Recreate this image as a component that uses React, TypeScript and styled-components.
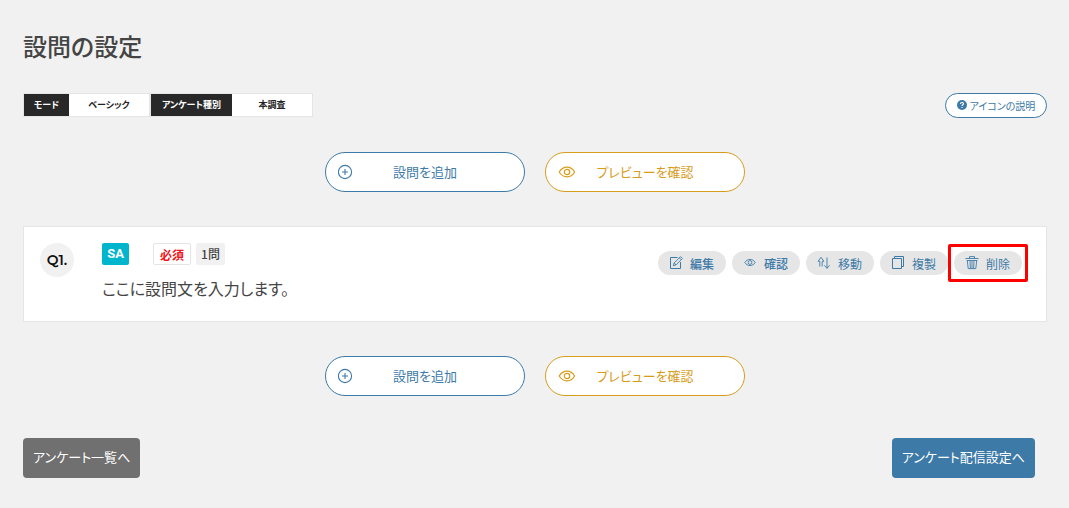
import React from 'react';
import styled, { createGlobalStyle } from 'styled-components';

const blue = '#3d7aa7';
const amber = '#d89c1a';

const GlobalStyle = createGlobalStyle`
  *, *::before, *::after { box-sizing: border-box; }
  body {
    margin: 0;
    background: #f1f1f1;
    color: #444;
    font-family: "Noto Sans CJK JP", "Noto Sans", sans-serif;
    font-feature-settings: "palt";
    font-size: 13px;
  }
  button { font: inherit; font-feature-settings: inherit; cursor: pointer; }
`;

const Page = styled.main`
  padding: 28px 22px 30px 23px;
`;

const Title = styled.h1`
  margin: 0 0 29px;
  font-size: 24px;
  line-height: 36px;
  font-weight: 500;
`;

const InfoBar = styled.div`
  display: flex;
  justify-content: space-between;
  align-items: flex-start;
`;

const Tags = styled.div`
  display: flex;
`;

const Tag = styled.dl`
  display: flex;
  margin: 0;
  border: 1px solid #e5e5e5;
  font-size: 9px;
  line-height: 22px;
  font-weight: 700;
  color: #222;
  text-align: center;
`;

const TagName = styled.dt<{ $wide?: boolean }>`
  width: ${(p) => (p.$wide ? 81 : 45)}px;
  background: #282828;
  color: #fff;
`;

const TagValue = styled.dd`
  width: 80px;
  margin: 0;
  background: #fff;
`;

const HelpButton = styled.button`
  display: flex;
  align-items: center;
  justify-content: center;
  gap: 3px;
  width: 102px;
  height: 25px;
  padding: 0 0 1px;
  border: 1px solid ${blue};
  border-radius: 13px;
  background: #fff;
  color: ${blue};
  && { font-size: 10px; }
`;

const Actions = styled.div`
  display: flex;
  justify-content: center;
  gap: 20px;
  margin: 34px 0;
`;

const ActionButton = styled.button<{ $color: string }>`
  display: grid;
  grid-template-columns: 20px 1fr 20px;
  align-items: center;
  justify-items: center;
  width: 200px;
  height: 40px;
  padding: 0 10px;
  border: 1px solid ${(p) => p.$color};
  border-radius: 20px;
  background: #fff;
  color: ${(p) => p.$color};
`;

const ActionLabel = styled.span`
  padding-bottom: 2px;
`;

const Card = styled.section`
  display: flex;
  align-items: flex-start;
  min-height: 96px;
  padding: 16px 24px 16px 16px;
  border: 1px solid #e5e5e5;
  background: #fff;
`;

const Number = styled.span`
  display: flex;
  align-items: center;
  justify-content: center;
  width: 34px;
  height: 34px;
  margin-right: 28px;
  border-radius: 50%;
  background: #f1f1f1;
  color: #111;
  font: 600 14px/34px Montserrat, Inter, sans-serif;
`;

const Question = styled.div`
  flex: 1;
`;

const Badges = styled.div`
  display: flex;
  gap: 5px;
  height: 22px;
  font-size: 12px;
  line-height: 22px;
  font-weight: 500;
`;

const TypeBadge = styled.span`
  width: 27px;
  margin-right: 19px;
  border-radius: 2px;
  background: #00b5cc;
  color: #fff;
  font-family: Roboto, sans-serif;
  font-size: 13px;
  font-weight: 700;
  text-align: center;
`;

const RequiredBadge = styled.span`
  width: 38px;
  border: 1px solid #e5e5e5;
  border-radius: 2px;
  color: #ee1520;
  font-weight: 700;
  text-align: center;
`;

const CountBadge = styled.span`
  width: 29px;
  border-radius: 2px;
  background: #f1f1f1;
  text-align: center;
`;

const QuestionText = styled.p`
  margin: 10px 0 0;
  font-size: 16px;
  line-height: 26px;
`;

const Tools = styled.div`
  display: flex;
  gap: 6px;
  margin-top: 8px;
`;

const ToolButton = styled.button<{ $strong?: boolean; $marked?: boolean }>`
  position: relative;
  display: flex;
  align-items: center;
  gap: 7px;
  width: 68px;
  height: 24px;
  padding: 0 0 0 11px;
  border: 0;
  border-radius: 12px;
  background: #e6e6e6;
  color: ${blue};
  && {
    font-size: 12px;
    font-weight: ${(p) => (p.$strong ? 500 : 400)};
  }
  &::after {
    content: "";
    display: ${(p) => (p.$marked ? 'block' : 'none')};
    position: absolute;
    inset: -7px -6px;
    border: 3px solid #f00;
    border-radius: 2px;
  }
`;

const Footer = styled.nav`
  display: flex;
  justify-content: space-between;
  margin-top: 42px;
  padding-right: 12px;
`;

const NavLink = styled.a<{ $bg: string }>`
  height: 40px;
  padding: 0 10px;
  border-radius: 4px;
  background: ${(p) => p.$bg};
  color: #fff;
  line-height: 38px;
  text-decoration: none;
`;

const Icon = styled.svg`
  flex: none;
  fill: none;
  stroke: currentColor;
`;

const PlusIcon = () => (
  <Icon width="16" height="16" viewBox="0 0 16 16" strokeWidth="1.1">
    <circle cx="7" cy="8" r="6.600" />
    <path d="M7 5v6M4 8h6" />
  </Icon>
);

const EyeIcon = () => (
  <Icon width="18" height="18" viewBox="0 0 18 18" strokeWidth="1.200">
    <path d="M2.200 9C4 6.200 6.800 4.200 10 4.200S16 6.200 17.600 9C16 11.800 13.200 13.800 10 13.800S4 11.800 2.200 9Z" />
    <circle cx="10" cy="9" r="2.700" />
  </Icon>
);

const SmallEyeIcon = () => (
  <Icon width="14" height="14" viewBox="0 0 14 14" strokeWidth=".9">
    <path d="M1.800 6.500C3 4.600 4.800 3.400 7 3.400S11 4.600 12.200 6.500C11 8.400 9.200 9.600 7 9.600S3 8.400 1.800 6.500Z" />
    <circle cx="7" cy="6.500" r="1.900" />
  </Icon>
);

const EditIcon = () => (
  <Icon width="14" height="14" viewBox="0 0 14 14">
    <path d="M8.500 1.500H1.500V12.500H11.500V6" />
    <path d="M4.300 9.700 5.100 7 11.500.6 13.400 2.500 7 8.900ZM10.300 1.800 12.200 3.700M5.100 7 7 8.900" strokeWidth=".9" />
  </Icon>
);

const MoveIcon = () => (
  <Icon width="14" height="14" viewBox="0 0 14 14" strokeWidth=".9">
    <path d="M2.800 10.500V5.300H1.100L4 1.300 6.900 5.300H5.200V10.500M10 1.500V12.300M7.400 9.300 10 12.300 12.600 9.300" />
  </Icon>
);

const CopyIcon = () => (
  <Icon width="14" height="14" viewBox="0 0 14 14">
    <path d="M1.500 2.500H10.500V12.500H1.500ZM3.500 2.500V.5H12.500V10.500H10.500" />
  </Icon>
);

const TrashIcon = () => (
  <Icon width="14" height="14" viewBox="0 0 14 14">
    <path d="M.5 2.500H13.500M4.500 2.500V.6H9.500V2.500M1.700 4.500H12.300M2.300 4.500 3.200 12.600H10.800L11.700 4.500M5 5 5.400 12.500M7 5V12.500M9 5 8.600 12.500" strokeWidth=".9" />
  </Icon>
);

const HelpIcon = () => (
  <Icon width="10" height="10" viewBox="0 0 10 10">
    <circle cx="5" cy="5" r="5" fill="currentColor" stroke="none" />
    <path d="M3.500 3.900C3.500 2 6.500 2 6.500 3.800 6.500 4.700 5 4.800 5 5.900M5 7V8" stroke="#fff" strokeWidth="1.100" />
  </Icon>
);

const QuestionActions = () => (
  <Actions>
    <ActionButton type="button" $color={blue}>
      <PlusIcon />
      <ActionLabel>設問を追加</ActionLabel>
    </ActionButton>
    <ActionButton type="button" $color={amber}>
      <EyeIcon />
      <ActionLabel>プレビューを確認</ActionLabel>
    </ActionButton>
  </Actions>
);

export default function App() {
  return (
    <>
      <GlobalStyle />
      <Page>
        <Title>設問の設定</Title>
        <InfoBar>
          <Tags>
            <Tag>
              <TagName>モード</TagName>
              <TagValue>ベーシック</TagValue>
            </Tag>
            <Tag>
              <TagName $wide>アンケート種別</TagName>
              <TagValue>本調査</TagValue>
            </Tag>
          </Tags>
          <HelpButton type="button">
            <HelpIcon />
            アイコンの説明
          </HelpButton>
        </InfoBar>
        <QuestionActions />
        <Card>
          <Number>Q1.</Number>
          <Question>
            <Badges>
              <TypeBadge>SA</TypeBadge>
              <RequiredBadge>必須</RequiredBadge>
              <CountBadge>1問</CountBadge>
            </Badges>
            <QuestionText>ここに設問文を入力します。</QuestionText>
          </Question>
          <Tools>
            <ToolButton type="button" $strong><EditIcon />編集</ToolButton>
            <ToolButton type="button" $strong><SmallEyeIcon />確認</ToolButton>
            <ToolButton type="button"><MoveIcon />移動</ToolButton>
            <ToolButton type="button"><CopyIcon />複製</ToolButton>
            <ToolButton type="button" $marked><TrashIcon />削除</ToolButton>
          </Tools>
        </Card>
        <QuestionActions />
        <Footer>
          <NavLink href="#list" $bg="#707070">アンケート一覧へ</NavLink>
          <NavLink href="#delivery" $bg={blue}>アンケート配信設定へ</NavLink>
        </Footer>
      </Page>
    </>
  );
}
